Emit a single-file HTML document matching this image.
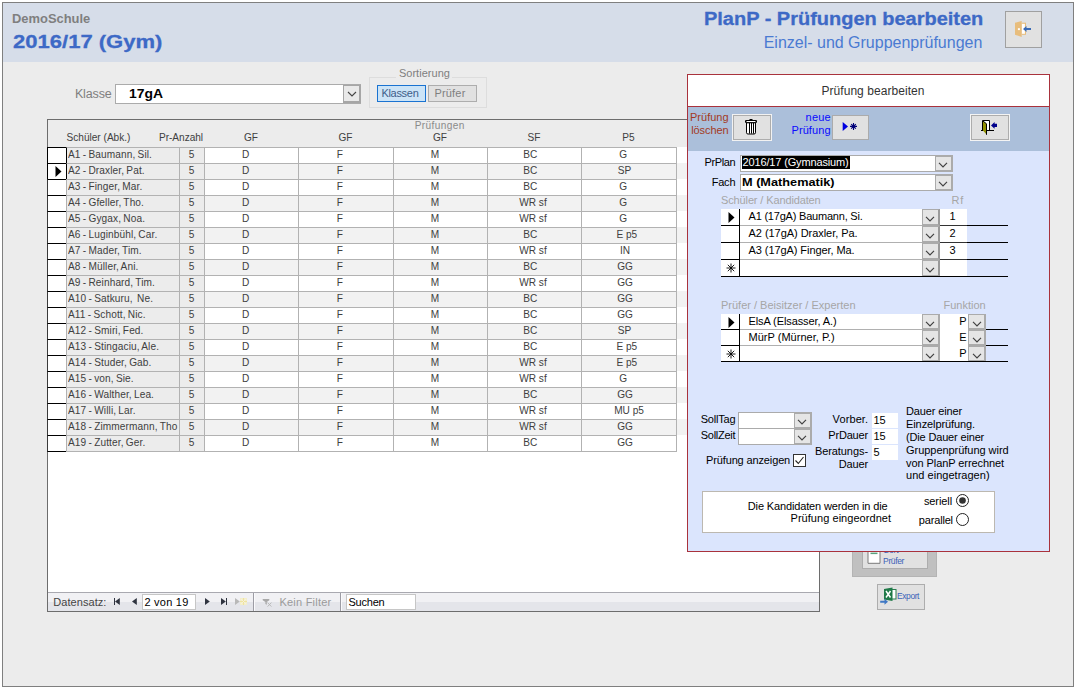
<!DOCTYPE html>
<html lang="de"><head><meta charset="utf-8"><title>PlanP - Prüfungen bearbeiten</title>
<style>
html,body{margin:0;padding:0;background:#fff;}
body{width:1078px;height:691px;position:relative;overflow:hidden;font-family:"Liberation Sans", sans-serif;}
div,span,svg{position:absolute;box-sizing:border-box;}
span{white-space:pre;}
</style></head><body>
<div style="left:2px;top:2px;width:1072px;height:685px;background:#ececec;border:1px solid #7f7f7f;"></div>
<div style="left:3px;top:3px;width:1070px;height:59px;background:#d6dde9;"></div>
<span style="top:11px;line-height:16px;font-size:12.5px;color:#7f7f7f;font-weight:bold;left:11.9px;transform:scaleX(1.0334);transform-origin:0 50%;">DemoSchule</span>
<span style="top:29px;line-height:25px;font-size:19px;color:#3d69c6;font-weight:bold;-webkit-text-stroke:0.3px;left:12.6px;transform:scaleX(1.1594);transform-origin:0 50%;">2016/17 (Gym)</span>
<span style="top:7px;line-height:24px;font-size:18.7px;color:#3d69c6;font-weight:bold;-webkit-text-stroke:0.3px;right:94.6px;transform:scaleX(1.0690);transform-origin:100% 50%;">PlanP - Prüfungen bearbeiten</span>
<span style="top:32px;line-height:21px;font-size:16px;color:#4a7ad2;letter-spacing:-0.008px;right:95.7px;">Einzel- und Gruppenprüfungen</span>
<div style="left:1005px;top:11px;width:37px;height:37px;background:#e1e1e1;border:1px solid #a0a0a0;"></div>
<svg style="left:1010px;top:16px" width="26" height="26" viewBox="1010 16 26 26">
<rect x="1021.7" y="22.7" width="4.3" height="12.1" fill="#e8bd7c"/>
<rect x="1021.7" y="23.8" width="3.2" height="10" fill="#fff"/>
<path d="M1015 22.7 L1021.7 20.9 V36.9 L1015 34.8 Z" fill="#e8bd7c"/>
<rect x="1017.9" y="28.2" width="2" height="1.9" fill="#fff"/>
<path d="M1023 29 L1026.5 26 V28 H1031 V30 H1026.5 V32 Z" fill="#3a6bb5"/>
</svg>
<span style="top:86px;line-height:16px;font-size:12.5px;color:#7f7f7f;letter-spacing:-0.130px;left:74.9px;">Klasse</span>
<div style="left:115px;top:84px;width:246px;height:20px;background:#fff;border:1px solid #ababab;"></div>
<span style="top:86px;line-height:16px;font-size:12.5px;color:#000;font-weight:bold;left:128.7px;transform:scaleX(1.1103);transform-origin:0 50%;">17gA</span>
<div style="left:343px;top:85px;width:18px;height:18px;background:#e9e9e9;border:1px solid #a6a6a6;border-right-width:2px;border-bottom-width:2px;"></div>
<svg style="left:347px;top:91px" width="10" height="7" viewBox="0 0 10 7"><path d="M1 1 L5 5 L9 1" fill="none" stroke="#444" stroke-width="1.1"/></svg>
<div style="left:369px;top:77px;width:118px;height:31px;border:1px solid #dddddd;"></div>
<div style="left:396px;top:70px;width:56px;height:10px;background:#ececec;"></div>
<span style="top:66px;line-height:14px;font-size:11px;color:#7f7f7f;letter-spacing:0.033px;left:398.9px;">Sortierung</span>
<div style="left:377px;top:85px;width:49px;height:17px;background:#cce4f7;border:1px solid #1a73d1;"></div>
<span style="top:86px;line-height:14px;font-size:11px;color:#3e5e8a;letter-spacing:-0.292px;left:381.4px;">Klassen</span>
<div style="left:428px;top:85px;width:49px;height:17px;background:#e1e1e1;border:1px solid #adadad;"></div>
<span style="top:86px;line-height:14px;font-size:11px;color:#7f7f7f;letter-spacing:0.189px;left:434.4px;">Prüfer</span>
<div style="left:47px;top:119px;width:773px;height:493px;background:#fff;border:1px solid #6d6d6d;"></div>
<div style="left:48px;top:120px;width:771px;height:28px;background:#ececec;"></div>
<span style="top:131px;line-height:13px;font-size:10.1px;color:#404040;left:66.5px;">Schüler (Abk.)</span>
<span style="top:131px;line-height:13px;font-size:10.1px;color:#404040;letter-spacing:-0.035px;left:159.0px;">Pr-Anzahl</span>
<span style="top:119px;line-height:13px;font-size:10.1px;color:#8a8a8a;letter-spacing:0.102px;left:289.8px;width:300px;text-align:center;letter-spacing:0.4px;">Prüfungen</span>
<span style="top:131px;line-height:13px;font-size:10.1px;color:#404040;left:101.0px;width:300px;text-align:center;">GF</span>
<span style="top:131px;line-height:13px;font-size:10.1px;color:#404040;left:195.5px;width:300px;text-align:center;">GF</span>
<span style="top:131px;line-height:13px;font-size:10.1px;color:#404040;left:290.0px;width:300px;text-align:center;">GF</span>
<span style="top:131px;line-height:13px;font-size:10.1px;color:#404040;left:384.0px;width:300px;text-align:center;">SF</span>
<span style="top:131px;line-height:13px;font-size:10.1px;color:#404040;left:478.5px;width:300px;text-align:center;">P5</span>
<div style="left:48px;top:147px;width:771px;height:16px;background:#ffffff;"></div>
<div style="left:47px;top:147px;width:20px;height:17px;background:#fff;border:1px solid #000;"></div>
<div style="left:66px;top:147px;width:114px;height:17px;background:#ececec;border:1px solid #b2b2b2;border-left:1px solid #000;"></div>
<div style="left:179px;top:147px;width:26px;height:17px;background:#ececec;border:1px solid #b2b2b2;"></div>
<div style="left:204px;top:147px;width:95px;height:17px;background:#ffffff;border:1px solid #b2b2b2;"></div>
<div style="left:298px;top:147px;width:96px;height:17px;background:#ffffff;border:1px solid #b2b2b2;"></div>
<div style="left:393px;top:147px;width:95px;height:17px;background:#ffffff;border:1px solid #b2b2b2;"></div>
<div style="left:487px;top:147px;width:95px;height:17px;background:#ffffff;border:1px solid #b2b2b2;"></div>
<div style="left:581px;top:147px;width:96px;height:17px;background:#ffffff;border:1px solid #b2b2b2;"></div>
<span style="top:148px;line-height:13px;font-size:10.1px;color:#404040;left:68.0px;width:110px;overflow:hidden;word-spacing:-0.7px;letter-spacing:0.11px;">A1 - Baumann, Sil.</span>
<span style="top:148px;line-height:13px;font-size:10.1px;color:#404040;left:41.5px;width:300px;text-align:center;">5</span>
<span style="top:148px;line-height:13px;font-size:10.1px;color:#404040;left:95.7px;width:300px;text-align:center;">D</span>
<span style="top:148px;line-height:13px;font-size:10.1px;color:#404040;left:189.9px;width:300px;text-align:center;">F</span>
<span style="top:148px;line-height:13px;font-size:10.1px;color:#404040;left:285.0px;width:300px;text-align:center;">M</span>
<span style="top:148px;line-height:13px;font-size:10.1px;color:#404040;left:380.3px;width:300px;text-align:center;">BC</span>
<span style="top:148px;line-height:13px;font-size:10.1px;color:#404040;left:473.3px;width:300px;text-align:center;">G</span>
<div style="left:48px;top:163px;width:771px;height:16px;background:#f2f2f2;"></div>
<div style="left:47px;top:163px;width:20px;height:17px;background:#fff;border:1px solid #000;"></div>
<div style="left:66px;top:163px;width:114px;height:17px;background:#ececec;border:1px solid #b2b2b2;border-left:1px solid #000;"></div>
<div style="left:179px;top:163px;width:26px;height:17px;background:#ececec;border:1px solid #b2b2b2;"></div>
<div style="left:204px;top:163px;width:95px;height:17px;background:#f2f2f2;border:1px solid #b2b2b2;"></div>
<div style="left:298px;top:163px;width:96px;height:17px;background:#f2f2f2;border:1px solid #b2b2b2;"></div>
<div style="left:393px;top:163px;width:95px;height:17px;background:#f2f2f2;border:1px solid #b2b2b2;"></div>
<div style="left:487px;top:163px;width:95px;height:17px;background:#f2f2f2;border:1px solid #b2b2b2;"></div>
<div style="left:581px;top:163px;width:96px;height:17px;background:#f2f2f2;border:1px solid #b2b2b2;"></div>
<span style="top:164px;line-height:13px;font-size:10.1px;color:#404040;left:68.0px;width:110px;overflow:hidden;word-spacing:-0.7px;letter-spacing:0.11px;">A2 - Draxler, Pat.</span>
<span style="top:164px;line-height:13px;font-size:10.1px;color:#404040;left:41.5px;width:300px;text-align:center;">5</span>
<span style="top:164px;line-height:13px;font-size:10.1px;color:#404040;left:95.7px;width:300px;text-align:center;">D</span>
<span style="top:164px;line-height:13px;font-size:10.1px;color:#404040;left:189.9px;width:300px;text-align:center;">F</span>
<span style="top:164px;line-height:13px;font-size:10.1px;color:#404040;left:285.0px;width:300px;text-align:center;">M</span>
<span style="top:164px;line-height:13px;font-size:10.1px;color:#404040;left:380.3px;width:300px;text-align:center;">BC</span>
<span style="top:164px;line-height:13px;font-size:10.1px;color:#404040;left:474.6px;width:300px;text-align:center;">SP</span>
<div style="left:48px;top:179px;width:771px;height:16px;background:#ffffff;"></div>
<div style="left:47px;top:179px;width:20px;height:17px;background:#fff;border:1px solid #000;border-right-color:#b2b2b2;border-left-color:#3a3a3a;"></div>
<div style="left:66px;top:179px;width:114px;height:17px;background:#ececec;border:1px solid #b2b2b2;"></div>
<div style="left:179px;top:179px;width:26px;height:17px;background:#ececec;border:1px solid #b2b2b2;"></div>
<div style="left:204px;top:179px;width:95px;height:17px;background:#ffffff;border:1px solid #b2b2b2;"></div>
<div style="left:298px;top:179px;width:96px;height:17px;background:#ffffff;border:1px solid #b2b2b2;"></div>
<div style="left:393px;top:179px;width:95px;height:17px;background:#ffffff;border:1px solid #b2b2b2;"></div>
<div style="left:487px;top:179px;width:95px;height:17px;background:#ffffff;border:1px solid #b2b2b2;"></div>
<div style="left:581px;top:179px;width:96px;height:17px;background:#ffffff;border:1px solid #b2b2b2;"></div>
<span style="top:180px;line-height:13px;font-size:10.1px;color:#404040;left:68.0px;width:110px;overflow:hidden;word-spacing:-0.7px;letter-spacing:0.11px;">A3 - Finger, Mar.</span>
<span style="top:180px;line-height:13px;font-size:10.1px;color:#404040;left:41.5px;width:300px;text-align:center;">5</span>
<span style="top:180px;line-height:13px;font-size:10.1px;color:#404040;left:95.7px;width:300px;text-align:center;">D</span>
<span style="top:180px;line-height:13px;font-size:10.1px;color:#404040;left:189.9px;width:300px;text-align:center;">F</span>
<span style="top:180px;line-height:13px;font-size:10.1px;color:#404040;left:285.0px;width:300px;text-align:center;">M</span>
<span style="top:180px;line-height:13px;font-size:10.1px;color:#404040;left:380.3px;width:300px;text-align:center;">BC</span>
<span style="top:180px;line-height:13px;font-size:10.1px;color:#404040;left:473.3px;width:300px;text-align:center;">G</span>
<div style="left:48px;top:195px;width:771px;height:16px;background:#f2f2f2;"></div>
<div style="left:47px;top:195px;width:20px;height:17px;background:#fff;border:1px solid #000;border-right-color:#b2b2b2;border-left-color:#3a3a3a;"></div>
<div style="left:66px;top:195px;width:114px;height:17px;background:#ececec;border:1px solid #b2b2b2;"></div>
<div style="left:179px;top:195px;width:26px;height:17px;background:#ececec;border:1px solid #b2b2b2;"></div>
<div style="left:204px;top:195px;width:95px;height:17px;background:#f2f2f2;border:1px solid #b2b2b2;"></div>
<div style="left:298px;top:195px;width:96px;height:17px;background:#f2f2f2;border:1px solid #b2b2b2;"></div>
<div style="left:393px;top:195px;width:95px;height:17px;background:#f2f2f2;border:1px solid #b2b2b2;"></div>
<div style="left:487px;top:195px;width:95px;height:17px;background:#f2f2f2;border:1px solid #b2b2b2;"></div>
<div style="left:581px;top:195px;width:96px;height:17px;background:#f2f2f2;border:1px solid #b2b2b2;"></div>
<span style="top:196px;line-height:13px;font-size:10.1px;color:#404040;left:68.0px;width:110px;overflow:hidden;word-spacing:-0.7px;letter-spacing:0.11px;">A4 - Gfeller, Tho.</span>
<span style="top:196px;line-height:13px;font-size:10.1px;color:#404040;left:41.5px;width:300px;text-align:center;">5</span>
<span style="top:196px;line-height:13px;font-size:10.1px;color:#404040;left:95.7px;width:300px;text-align:center;">D</span>
<span style="top:196px;line-height:13px;font-size:10.1px;color:#404040;left:189.9px;width:300px;text-align:center;">F</span>
<span style="top:196px;line-height:13px;font-size:10.1px;color:#404040;left:285.0px;width:300px;text-align:center;">M</span>
<span style="top:196px;line-height:13px;font-size:10.1px;color:#404040;left:383.0px;width:300px;text-align:center;">WR sf</span>
<span style="top:196px;line-height:13px;font-size:10.1px;color:#404040;left:473.3px;width:300px;text-align:center;">G</span>
<div style="left:48px;top:211px;width:771px;height:16px;background:#ffffff;"></div>
<div style="left:47px;top:211px;width:20px;height:17px;background:#fff;border:1px solid #000;border-right-color:#b2b2b2;border-left-color:#3a3a3a;"></div>
<div style="left:66px;top:211px;width:114px;height:17px;background:#ececec;border:1px solid #b2b2b2;"></div>
<div style="left:179px;top:211px;width:26px;height:17px;background:#ececec;border:1px solid #b2b2b2;"></div>
<div style="left:204px;top:211px;width:95px;height:17px;background:#ffffff;border:1px solid #b2b2b2;"></div>
<div style="left:298px;top:211px;width:96px;height:17px;background:#ffffff;border:1px solid #b2b2b2;"></div>
<div style="left:393px;top:211px;width:95px;height:17px;background:#ffffff;border:1px solid #b2b2b2;"></div>
<div style="left:487px;top:211px;width:95px;height:17px;background:#ffffff;border:1px solid #b2b2b2;"></div>
<div style="left:581px;top:211px;width:96px;height:17px;background:#ffffff;border:1px solid #b2b2b2;"></div>
<span style="top:212px;line-height:13px;font-size:10.1px;color:#404040;left:68.0px;width:110px;overflow:hidden;word-spacing:-0.7px;letter-spacing:0.11px;">A5 - Gygax, Noa.</span>
<span style="top:212px;line-height:13px;font-size:10.1px;color:#404040;left:41.5px;width:300px;text-align:center;">5</span>
<span style="top:212px;line-height:13px;font-size:10.1px;color:#404040;left:95.7px;width:300px;text-align:center;">D</span>
<span style="top:212px;line-height:13px;font-size:10.1px;color:#404040;left:189.9px;width:300px;text-align:center;">F</span>
<span style="top:212px;line-height:13px;font-size:10.1px;color:#404040;left:285.0px;width:300px;text-align:center;">M</span>
<span style="top:212px;line-height:13px;font-size:10.1px;color:#404040;left:383.0px;width:300px;text-align:center;">WR sf</span>
<span style="top:212px;line-height:13px;font-size:10.1px;color:#404040;left:473.3px;width:300px;text-align:center;">G</span>
<div style="left:48px;top:227px;width:771px;height:16px;background:#f2f2f2;"></div>
<div style="left:47px;top:227px;width:20px;height:17px;background:#fff;border:1px solid #000;border-right-color:#b2b2b2;border-left-color:#3a3a3a;"></div>
<div style="left:66px;top:227px;width:114px;height:17px;background:#ececec;border:1px solid #b2b2b2;"></div>
<div style="left:179px;top:227px;width:26px;height:17px;background:#ececec;border:1px solid #b2b2b2;"></div>
<div style="left:204px;top:227px;width:95px;height:17px;background:#f2f2f2;border:1px solid #b2b2b2;"></div>
<div style="left:298px;top:227px;width:96px;height:17px;background:#f2f2f2;border:1px solid #b2b2b2;"></div>
<div style="left:393px;top:227px;width:95px;height:17px;background:#f2f2f2;border:1px solid #b2b2b2;"></div>
<div style="left:487px;top:227px;width:95px;height:17px;background:#f2f2f2;border:1px solid #b2b2b2;"></div>
<div style="left:581px;top:227px;width:96px;height:17px;background:#f2f2f2;border:1px solid #b2b2b2;"></div>
<span style="top:228px;line-height:13px;font-size:10.1px;color:#404040;left:68.0px;width:110px;overflow:hidden;word-spacing:-0.7px;letter-spacing:0.11px;">A6 - Luginbühl, Car.</span>
<span style="top:228px;line-height:13px;font-size:10.1px;color:#404040;left:41.5px;width:300px;text-align:center;">5</span>
<span style="top:228px;line-height:13px;font-size:10.1px;color:#404040;left:95.7px;width:300px;text-align:center;">D</span>
<span style="top:228px;line-height:13px;font-size:10.1px;color:#404040;left:189.9px;width:300px;text-align:center;">F</span>
<span style="top:228px;line-height:13px;font-size:10.1px;color:#404040;left:285.0px;width:300px;text-align:center;">M</span>
<span style="top:228px;line-height:13px;font-size:10.1px;color:#404040;left:380.3px;width:300px;text-align:center;">BC</span>
<span style="top:228px;line-height:13px;font-size:10.1px;color:#404040;left:476.8px;width:300px;text-align:center;">E p5</span>
<div style="left:48px;top:243px;width:771px;height:16px;background:#ffffff;"></div>
<div style="left:47px;top:243px;width:20px;height:17px;background:#fff;border:1px solid #000;border-right-color:#b2b2b2;border-left-color:#3a3a3a;"></div>
<div style="left:66px;top:243px;width:114px;height:17px;background:#ececec;border:1px solid #b2b2b2;"></div>
<div style="left:179px;top:243px;width:26px;height:17px;background:#ececec;border:1px solid #b2b2b2;"></div>
<div style="left:204px;top:243px;width:95px;height:17px;background:#ffffff;border:1px solid #b2b2b2;"></div>
<div style="left:298px;top:243px;width:96px;height:17px;background:#ffffff;border:1px solid #b2b2b2;"></div>
<div style="left:393px;top:243px;width:95px;height:17px;background:#ffffff;border:1px solid #b2b2b2;"></div>
<div style="left:487px;top:243px;width:95px;height:17px;background:#ffffff;border:1px solid #b2b2b2;"></div>
<div style="left:581px;top:243px;width:96px;height:17px;background:#ffffff;border:1px solid #b2b2b2;"></div>
<span style="top:244px;line-height:13px;font-size:10.1px;color:#404040;left:68.0px;width:110px;overflow:hidden;word-spacing:-0.7px;letter-spacing:0.11px;">A7 - Mader, Tim.</span>
<span style="top:244px;line-height:13px;font-size:10.1px;color:#404040;left:41.5px;width:300px;text-align:center;">5</span>
<span style="top:244px;line-height:13px;font-size:10.1px;color:#404040;left:95.7px;width:300px;text-align:center;">D</span>
<span style="top:244px;line-height:13px;font-size:10.1px;color:#404040;left:189.9px;width:300px;text-align:center;">F</span>
<span style="top:244px;line-height:13px;font-size:10.1px;color:#404040;left:285.0px;width:300px;text-align:center;">M</span>
<span style="top:244px;line-height:13px;font-size:10.1px;color:#404040;left:383.0px;width:300px;text-align:center;">WR sf</span>
<span style="top:244px;line-height:13px;font-size:10.1px;color:#404040;left:475.1px;width:300px;text-align:center;">IN</span>
<div style="left:48px;top:259px;width:771px;height:16px;background:#f2f2f2;"></div>
<div style="left:47px;top:259px;width:20px;height:17px;background:#fff;border:1px solid #000;border-right-color:#b2b2b2;border-left-color:#3a3a3a;"></div>
<div style="left:66px;top:259px;width:114px;height:17px;background:#ececec;border:1px solid #b2b2b2;"></div>
<div style="left:179px;top:259px;width:26px;height:17px;background:#ececec;border:1px solid #b2b2b2;"></div>
<div style="left:204px;top:259px;width:95px;height:17px;background:#f2f2f2;border:1px solid #b2b2b2;"></div>
<div style="left:298px;top:259px;width:96px;height:17px;background:#f2f2f2;border:1px solid #b2b2b2;"></div>
<div style="left:393px;top:259px;width:95px;height:17px;background:#f2f2f2;border:1px solid #b2b2b2;"></div>
<div style="left:487px;top:259px;width:95px;height:17px;background:#f2f2f2;border:1px solid #b2b2b2;"></div>
<div style="left:581px;top:259px;width:96px;height:17px;background:#f2f2f2;border:1px solid #b2b2b2;"></div>
<span style="top:260px;line-height:13px;font-size:10.1px;color:#404040;left:68.0px;width:110px;overflow:hidden;word-spacing:-0.7px;letter-spacing:0.11px;">A8 - Müller, Ani.</span>
<span style="top:260px;line-height:13px;font-size:10.1px;color:#404040;left:41.5px;width:300px;text-align:center;">5</span>
<span style="top:260px;line-height:13px;font-size:10.1px;color:#404040;left:95.7px;width:300px;text-align:center;">D</span>
<span style="top:260px;line-height:13px;font-size:10.1px;color:#404040;left:189.9px;width:300px;text-align:center;">F</span>
<span style="top:260px;line-height:13px;font-size:10.1px;color:#404040;left:285.0px;width:300px;text-align:center;">M</span>
<span style="top:260px;line-height:13px;font-size:10.1px;color:#404040;left:380.3px;width:300px;text-align:center;">BC</span>
<span style="top:260px;line-height:13px;font-size:10.1px;color:#404040;left:475.0px;width:300px;text-align:center;">GG</span>
<div style="left:48px;top:275px;width:771px;height:16px;background:#ffffff;"></div>
<div style="left:47px;top:275px;width:20px;height:17px;background:#fff;border:1px solid #000;border-right-color:#b2b2b2;border-left-color:#3a3a3a;"></div>
<div style="left:66px;top:275px;width:114px;height:17px;background:#ececec;border:1px solid #b2b2b2;"></div>
<div style="left:179px;top:275px;width:26px;height:17px;background:#ececec;border:1px solid #b2b2b2;"></div>
<div style="left:204px;top:275px;width:95px;height:17px;background:#ffffff;border:1px solid #b2b2b2;"></div>
<div style="left:298px;top:275px;width:96px;height:17px;background:#ffffff;border:1px solid #b2b2b2;"></div>
<div style="left:393px;top:275px;width:95px;height:17px;background:#ffffff;border:1px solid #b2b2b2;"></div>
<div style="left:487px;top:275px;width:95px;height:17px;background:#ffffff;border:1px solid #b2b2b2;"></div>
<div style="left:581px;top:275px;width:96px;height:17px;background:#ffffff;border:1px solid #b2b2b2;"></div>
<span style="top:276px;line-height:13px;font-size:10.1px;color:#404040;left:68.0px;width:110px;overflow:hidden;word-spacing:-0.7px;letter-spacing:0.11px;">A9 - Reinhard, Tim.</span>
<span style="top:276px;line-height:13px;font-size:10.1px;color:#404040;left:41.5px;width:300px;text-align:center;">5</span>
<span style="top:276px;line-height:13px;font-size:10.1px;color:#404040;left:95.7px;width:300px;text-align:center;">D</span>
<span style="top:276px;line-height:13px;font-size:10.1px;color:#404040;left:189.9px;width:300px;text-align:center;">F</span>
<span style="top:276px;line-height:13px;font-size:10.1px;color:#404040;left:285.0px;width:300px;text-align:center;">M</span>
<span style="top:276px;line-height:13px;font-size:10.1px;color:#404040;left:383.0px;width:300px;text-align:center;">WR sf</span>
<span style="top:276px;line-height:13px;font-size:10.1px;color:#404040;left:475.0px;width:300px;text-align:center;">GG</span>
<div style="left:48px;top:291px;width:771px;height:16px;background:#f2f2f2;"></div>
<div style="left:47px;top:291px;width:20px;height:17px;background:#fff;border:1px solid #000;border-right-color:#b2b2b2;border-left-color:#3a3a3a;"></div>
<div style="left:66px;top:291px;width:114px;height:17px;background:#ececec;border:1px solid #b2b2b2;"></div>
<div style="left:179px;top:291px;width:26px;height:17px;background:#ececec;border:1px solid #b2b2b2;"></div>
<div style="left:204px;top:291px;width:95px;height:17px;background:#f2f2f2;border:1px solid #b2b2b2;"></div>
<div style="left:298px;top:291px;width:96px;height:17px;background:#f2f2f2;border:1px solid #b2b2b2;"></div>
<div style="left:393px;top:291px;width:95px;height:17px;background:#f2f2f2;border:1px solid #b2b2b2;"></div>
<div style="left:487px;top:291px;width:95px;height:17px;background:#f2f2f2;border:1px solid #b2b2b2;"></div>
<div style="left:581px;top:291px;width:96px;height:17px;background:#f2f2f2;border:1px solid #b2b2b2;"></div>
<span style="top:292px;line-height:13px;font-size:10.1px;color:#404040;left:68.0px;width:110px;overflow:hidden;word-spacing:-0.7px;letter-spacing:0.11px;">A10 - Satkuru,  Ne.</span>
<span style="top:292px;line-height:13px;font-size:10.1px;color:#404040;left:41.5px;width:300px;text-align:center;">5</span>
<span style="top:292px;line-height:13px;font-size:10.1px;color:#404040;left:95.7px;width:300px;text-align:center;">D</span>
<span style="top:292px;line-height:13px;font-size:10.1px;color:#404040;left:189.9px;width:300px;text-align:center;">F</span>
<span style="top:292px;line-height:13px;font-size:10.1px;color:#404040;left:285.0px;width:300px;text-align:center;">M</span>
<span style="top:292px;line-height:13px;font-size:10.1px;color:#404040;left:380.3px;width:300px;text-align:center;">BC</span>
<span style="top:292px;line-height:13px;font-size:10.1px;color:#404040;left:475.0px;width:300px;text-align:center;">GG</span>
<div style="left:48px;top:307px;width:771px;height:16px;background:#ffffff;"></div>
<div style="left:47px;top:307px;width:20px;height:17px;background:#fff;border:1px solid #000;border-right-color:#b2b2b2;border-left-color:#3a3a3a;"></div>
<div style="left:66px;top:307px;width:114px;height:17px;background:#ececec;border:1px solid #b2b2b2;"></div>
<div style="left:179px;top:307px;width:26px;height:17px;background:#ececec;border:1px solid #b2b2b2;"></div>
<div style="left:204px;top:307px;width:95px;height:17px;background:#ffffff;border:1px solid #b2b2b2;"></div>
<div style="left:298px;top:307px;width:96px;height:17px;background:#ffffff;border:1px solid #b2b2b2;"></div>
<div style="left:393px;top:307px;width:95px;height:17px;background:#ffffff;border:1px solid #b2b2b2;"></div>
<div style="left:487px;top:307px;width:95px;height:17px;background:#ffffff;border:1px solid #b2b2b2;"></div>
<div style="left:581px;top:307px;width:96px;height:17px;background:#ffffff;border:1px solid #b2b2b2;"></div>
<span style="top:308px;line-height:13px;font-size:10.1px;color:#404040;left:68.0px;width:110px;overflow:hidden;word-spacing:-0.7px;letter-spacing:0.11px;">A11 - Schott, Nic.</span>
<span style="top:308px;line-height:13px;font-size:10.1px;color:#404040;left:41.5px;width:300px;text-align:center;">5</span>
<span style="top:308px;line-height:13px;font-size:10.1px;color:#404040;left:95.7px;width:300px;text-align:center;">D</span>
<span style="top:308px;line-height:13px;font-size:10.1px;color:#404040;left:189.9px;width:300px;text-align:center;">F</span>
<span style="top:308px;line-height:13px;font-size:10.1px;color:#404040;left:285.0px;width:300px;text-align:center;">M</span>
<span style="top:308px;line-height:13px;font-size:10.1px;color:#404040;left:380.3px;width:300px;text-align:center;">BC</span>
<span style="top:308px;line-height:13px;font-size:10.1px;color:#404040;left:475.0px;width:300px;text-align:center;">GG</span>
<div style="left:48px;top:323px;width:771px;height:16px;background:#f2f2f2;"></div>
<div style="left:47px;top:323px;width:20px;height:17px;background:#fff;border:1px solid #000;border-right-color:#b2b2b2;border-left-color:#3a3a3a;"></div>
<div style="left:66px;top:323px;width:114px;height:17px;background:#ececec;border:1px solid #b2b2b2;"></div>
<div style="left:179px;top:323px;width:26px;height:17px;background:#ececec;border:1px solid #b2b2b2;"></div>
<div style="left:204px;top:323px;width:95px;height:17px;background:#f2f2f2;border:1px solid #b2b2b2;"></div>
<div style="left:298px;top:323px;width:96px;height:17px;background:#f2f2f2;border:1px solid #b2b2b2;"></div>
<div style="left:393px;top:323px;width:95px;height:17px;background:#f2f2f2;border:1px solid #b2b2b2;"></div>
<div style="left:487px;top:323px;width:95px;height:17px;background:#f2f2f2;border:1px solid #b2b2b2;"></div>
<div style="left:581px;top:323px;width:96px;height:17px;background:#f2f2f2;border:1px solid #b2b2b2;"></div>
<span style="top:324px;line-height:13px;font-size:10.1px;color:#404040;left:68.0px;width:110px;overflow:hidden;word-spacing:-0.7px;letter-spacing:0.11px;">A12 - Smiri, Fed.</span>
<span style="top:324px;line-height:13px;font-size:10.1px;color:#404040;left:41.5px;width:300px;text-align:center;">5</span>
<span style="top:324px;line-height:13px;font-size:10.1px;color:#404040;left:95.7px;width:300px;text-align:center;">D</span>
<span style="top:324px;line-height:13px;font-size:10.1px;color:#404040;left:189.9px;width:300px;text-align:center;">F</span>
<span style="top:324px;line-height:13px;font-size:10.1px;color:#404040;left:285.0px;width:300px;text-align:center;">M</span>
<span style="top:324px;line-height:13px;font-size:10.1px;color:#404040;left:380.3px;width:300px;text-align:center;">BC</span>
<span style="top:324px;line-height:13px;font-size:10.1px;color:#404040;left:474.6px;width:300px;text-align:center;">SP</span>
<div style="left:48px;top:339px;width:771px;height:16px;background:#ffffff;"></div>
<div style="left:47px;top:339px;width:20px;height:17px;background:#fff;border:1px solid #000;border-right-color:#b2b2b2;border-left-color:#3a3a3a;"></div>
<div style="left:66px;top:339px;width:114px;height:17px;background:#ececec;border:1px solid #b2b2b2;"></div>
<div style="left:179px;top:339px;width:26px;height:17px;background:#ececec;border:1px solid #b2b2b2;"></div>
<div style="left:204px;top:339px;width:95px;height:17px;background:#ffffff;border:1px solid #b2b2b2;"></div>
<div style="left:298px;top:339px;width:96px;height:17px;background:#ffffff;border:1px solid #b2b2b2;"></div>
<div style="left:393px;top:339px;width:95px;height:17px;background:#ffffff;border:1px solid #b2b2b2;"></div>
<div style="left:487px;top:339px;width:95px;height:17px;background:#ffffff;border:1px solid #b2b2b2;"></div>
<div style="left:581px;top:339px;width:96px;height:17px;background:#ffffff;border:1px solid #b2b2b2;"></div>
<span style="top:340px;line-height:13px;font-size:10.1px;color:#404040;left:68.0px;width:110px;overflow:hidden;word-spacing:-0.7px;letter-spacing:0.11px;">A13 - Stingaciu, Ale.</span>
<span style="top:340px;line-height:13px;font-size:10.1px;color:#404040;left:41.5px;width:300px;text-align:center;">5</span>
<span style="top:340px;line-height:13px;font-size:10.1px;color:#404040;left:95.7px;width:300px;text-align:center;">D</span>
<span style="top:340px;line-height:13px;font-size:10.1px;color:#404040;left:189.9px;width:300px;text-align:center;">F</span>
<span style="top:340px;line-height:13px;font-size:10.1px;color:#404040;left:285.0px;width:300px;text-align:center;">M</span>
<span style="top:340px;line-height:13px;font-size:10.1px;color:#404040;left:380.3px;width:300px;text-align:center;">BC</span>
<span style="top:340px;line-height:13px;font-size:10.1px;color:#404040;left:476.8px;width:300px;text-align:center;">E p5</span>
<div style="left:48px;top:355px;width:771px;height:16px;background:#f2f2f2;"></div>
<div style="left:47px;top:355px;width:20px;height:17px;background:#fff;border:1px solid #000;border-right-color:#b2b2b2;border-left-color:#3a3a3a;"></div>
<div style="left:66px;top:355px;width:114px;height:17px;background:#ececec;border:1px solid #b2b2b2;"></div>
<div style="left:179px;top:355px;width:26px;height:17px;background:#ececec;border:1px solid #b2b2b2;"></div>
<div style="left:204px;top:355px;width:95px;height:17px;background:#f2f2f2;border:1px solid #b2b2b2;"></div>
<div style="left:298px;top:355px;width:96px;height:17px;background:#f2f2f2;border:1px solid #b2b2b2;"></div>
<div style="left:393px;top:355px;width:95px;height:17px;background:#f2f2f2;border:1px solid #b2b2b2;"></div>
<div style="left:487px;top:355px;width:95px;height:17px;background:#f2f2f2;border:1px solid #b2b2b2;"></div>
<div style="left:581px;top:355px;width:96px;height:17px;background:#f2f2f2;border:1px solid #b2b2b2;"></div>
<span style="top:356px;line-height:13px;font-size:10.1px;color:#404040;left:68.0px;width:110px;overflow:hidden;word-spacing:-0.7px;letter-spacing:0.11px;">A14 - Studer, Gab.</span>
<span style="top:356px;line-height:13px;font-size:10.1px;color:#404040;left:41.5px;width:300px;text-align:center;">5</span>
<span style="top:356px;line-height:13px;font-size:10.1px;color:#404040;left:95.7px;width:300px;text-align:center;">D</span>
<span style="top:356px;line-height:13px;font-size:10.1px;color:#404040;left:189.9px;width:300px;text-align:center;">F</span>
<span style="top:356px;line-height:13px;font-size:10.1px;color:#404040;left:285.0px;width:300px;text-align:center;">M</span>
<span style="top:356px;line-height:13px;font-size:10.1px;color:#404040;left:383.0px;width:300px;text-align:center;">WR sf</span>
<span style="top:356px;line-height:13px;font-size:10.1px;color:#404040;left:476.8px;width:300px;text-align:center;">E p5</span>
<div style="left:48px;top:371px;width:771px;height:16px;background:#ffffff;"></div>
<div style="left:47px;top:371px;width:20px;height:17px;background:#fff;border:1px solid #000;border-right-color:#b2b2b2;border-left-color:#3a3a3a;"></div>
<div style="left:66px;top:371px;width:114px;height:17px;background:#ececec;border:1px solid #b2b2b2;"></div>
<div style="left:179px;top:371px;width:26px;height:17px;background:#ececec;border:1px solid #b2b2b2;"></div>
<div style="left:204px;top:371px;width:95px;height:17px;background:#ffffff;border:1px solid #b2b2b2;"></div>
<div style="left:298px;top:371px;width:96px;height:17px;background:#ffffff;border:1px solid #b2b2b2;"></div>
<div style="left:393px;top:371px;width:95px;height:17px;background:#ffffff;border:1px solid #b2b2b2;"></div>
<div style="left:487px;top:371px;width:95px;height:17px;background:#ffffff;border:1px solid #b2b2b2;"></div>
<div style="left:581px;top:371px;width:96px;height:17px;background:#ffffff;border:1px solid #b2b2b2;"></div>
<span style="top:372px;line-height:13px;font-size:10.1px;color:#404040;left:68.0px;width:110px;overflow:hidden;word-spacing:-0.7px;letter-spacing:0.11px;">A15 - von, Sie.</span>
<span style="top:372px;line-height:13px;font-size:10.1px;color:#404040;left:41.5px;width:300px;text-align:center;">5</span>
<span style="top:372px;line-height:13px;font-size:10.1px;color:#404040;left:95.7px;width:300px;text-align:center;">D</span>
<span style="top:372px;line-height:13px;font-size:10.1px;color:#404040;left:189.9px;width:300px;text-align:center;">F</span>
<span style="top:372px;line-height:13px;font-size:10.1px;color:#404040;left:285.0px;width:300px;text-align:center;">M</span>
<span style="top:372px;line-height:13px;font-size:10.1px;color:#404040;left:383.0px;width:300px;text-align:center;">WR sf</span>
<span style="top:372px;line-height:13px;font-size:10.1px;color:#404040;left:473.3px;width:300px;text-align:center;">G</span>
<div style="left:48px;top:387px;width:771px;height:16px;background:#f2f2f2;"></div>
<div style="left:47px;top:387px;width:20px;height:17px;background:#fff;border:1px solid #000;border-right-color:#b2b2b2;border-left-color:#3a3a3a;"></div>
<div style="left:66px;top:387px;width:114px;height:17px;background:#ececec;border:1px solid #b2b2b2;"></div>
<div style="left:179px;top:387px;width:26px;height:17px;background:#ececec;border:1px solid #b2b2b2;"></div>
<div style="left:204px;top:387px;width:95px;height:17px;background:#f2f2f2;border:1px solid #b2b2b2;"></div>
<div style="left:298px;top:387px;width:96px;height:17px;background:#f2f2f2;border:1px solid #b2b2b2;"></div>
<div style="left:393px;top:387px;width:95px;height:17px;background:#f2f2f2;border:1px solid #b2b2b2;"></div>
<div style="left:487px;top:387px;width:95px;height:17px;background:#f2f2f2;border:1px solid #b2b2b2;"></div>
<div style="left:581px;top:387px;width:96px;height:17px;background:#f2f2f2;border:1px solid #b2b2b2;"></div>
<span style="top:388px;line-height:13px;font-size:10.1px;color:#404040;left:68.0px;width:110px;overflow:hidden;word-spacing:-0.7px;letter-spacing:0.11px;">A16 - Walther, Lea.</span>
<span style="top:388px;line-height:13px;font-size:10.1px;color:#404040;left:41.5px;width:300px;text-align:center;">5</span>
<span style="top:388px;line-height:13px;font-size:10.1px;color:#404040;left:95.7px;width:300px;text-align:center;">D</span>
<span style="top:388px;line-height:13px;font-size:10.1px;color:#404040;left:189.9px;width:300px;text-align:center;">F</span>
<span style="top:388px;line-height:13px;font-size:10.1px;color:#404040;left:285.0px;width:300px;text-align:center;">M</span>
<span style="top:388px;line-height:13px;font-size:10.1px;color:#404040;left:380.3px;width:300px;text-align:center;">BC</span>
<span style="top:388px;line-height:13px;font-size:10.1px;color:#404040;left:475.0px;width:300px;text-align:center;">GG</span>
<div style="left:48px;top:403px;width:771px;height:16px;background:#ffffff;"></div>
<div style="left:47px;top:403px;width:20px;height:17px;background:#fff;border:1px solid #000;border-right-color:#b2b2b2;border-left-color:#3a3a3a;"></div>
<div style="left:66px;top:403px;width:114px;height:17px;background:#ececec;border:1px solid #b2b2b2;"></div>
<div style="left:179px;top:403px;width:26px;height:17px;background:#ececec;border:1px solid #b2b2b2;"></div>
<div style="left:204px;top:403px;width:95px;height:17px;background:#ffffff;border:1px solid #b2b2b2;"></div>
<div style="left:298px;top:403px;width:96px;height:17px;background:#ffffff;border:1px solid #b2b2b2;"></div>
<div style="left:393px;top:403px;width:95px;height:17px;background:#ffffff;border:1px solid #b2b2b2;"></div>
<div style="left:487px;top:403px;width:95px;height:17px;background:#ffffff;border:1px solid #b2b2b2;"></div>
<div style="left:581px;top:403px;width:96px;height:17px;background:#ffffff;border:1px solid #b2b2b2;"></div>
<span style="top:404px;line-height:13px;font-size:10.1px;color:#404040;left:68.0px;width:110px;overflow:hidden;word-spacing:-0.7px;letter-spacing:0.11px;">A17 - Willi, Lar.</span>
<span style="top:404px;line-height:13px;font-size:10.1px;color:#404040;left:41.5px;width:300px;text-align:center;">5</span>
<span style="top:404px;line-height:13px;font-size:10.1px;color:#404040;left:95.7px;width:300px;text-align:center;">D</span>
<span style="top:404px;line-height:13px;font-size:10.1px;color:#404040;left:189.9px;width:300px;text-align:center;">F</span>
<span style="top:404px;line-height:13px;font-size:10.1px;color:#404040;left:285.0px;width:300px;text-align:center;">M</span>
<span style="top:404px;line-height:13px;font-size:10.1px;color:#404040;left:383.0px;width:300px;text-align:center;">WR sf</span>
<span style="top:404px;line-height:13px;font-size:10.1px;color:#404040;left:479.0px;width:300px;text-align:center;">MU p5</span>
<div style="left:48px;top:419px;width:771px;height:16px;background:#f2f2f2;"></div>
<div style="left:47px;top:419px;width:20px;height:17px;background:#fff;border:1px solid #000;border-right-color:#b2b2b2;border-left-color:#3a3a3a;"></div>
<div style="left:66px;top:419px;width:114px;height:17px;background:#ececec;border:1px solid #b2b2b2;"></div>
<div style="left:179px;top:419px;width:26px;height:17px;background:#ececec;border:1px solid #b2b2b2;"></div>
<div style="left:204px;top:419px;width:95px;height:17px;background:#f2f2f2;border:1px solid #b2b2b2;"></div>
<div style="left:298px;top:419px;width:96px;height:17px;background:#f2f2f2;border:1px solid #b2b2b2;"></div>
<div style="left:393px;top:419px;width:95px;height:17px;background:#f2f2f2;border:1px solid #b2b2b2;"></div>
<div style="left:487px;top:419px;width:95px;height:17px;background:#f2f2f2;border:1px solid #b2b2b2;"></div>
<div style="left:581px;top:419px;width:96px;height:17px;background:#f2f2f2;border:1px solid #b2b2b2;"></div>
<span style="top:420px;line-height:13px;font-size:10.1px;color:#404040;left:68.0px;width:110px;overflow:hidden;word-spacing:-0.7px;letter-spacing:0.11px;">A18 - Zimmermann, Tho</span>
<span style="top:420px;line-height:13px;font-size:10.1px;color:#404040;left:41.5px;width:300px;text-align:center;">5</span>
<span style="top:420px;line-height:13px;font-size:10.1px;color:#404040;left:95.7px;width:300px;text-align:center;">D</span>
<span style="top:420px;line-height:13px;font-size:10.1px;color:#404040;left:189.9px;width:300px;text-align:center;">F</span>
<span style="top:420px;line-height:13px;font-size:10.1px;color:#404040;left:285.0px;width:300px;text-align:center;">M</span>
<span style="top:420px;line-height:13px;font-size:10.1px;color:#404040;left:383.0px;width:300px;text-align:center;">WR sf</span>
<span style="top:420px;line-height:13px;font-size:10.1px;color:#404040;left:475.0px;width:300px;text-align:center;">GG</span>
<div style="left:48px;top:435px;width:771px;height:16px;background:#ffffff;"></div>
<div style="left:47px;top:435px;width:20px;height:17px;background:#fff;border:1px solid #000;border-right-color:#b2b2b2;border-left-color:#3a3a3a;"></div>
<div style="left:66px;top:435px;width:114px;height:17px;background:#ececec;border:1px solid #b2b2b2;"></div>
<div style="left:179px;top:435px;width:26px;height:17px;background:#ececec;border:1px solid #b2b2b2;"></div>
<div style="left:204px;top:435px;width:95px;height:17px;background:#ffffff;border:1px solid #b2b2b2;"></div>
<div style="left:298px;top:435px;width:96px;height:17px;background:#ffffff;border:1px solid #b2b2b2;"></div>
<div style="left:393px;top:435px;width:95px;height:17px;background:#ffffff;border:1px solid #b2b2b2;"></div>
<div style="left:487px;top:435px;width:95px;height:17px;background:#ffffff;border:1px solid #b2b2b2;"></div>
<div style="left:581px;top:435px;width:96px;height:17px;background:#ffffff;border:1px solid #b2b2b2;"></div>
<span style="top:436px;line-height:13px;font-size:10.1px;color:#404040;left:68.0px;width:110px;overflow:hidden;word-spacing:-0.7px;letter-spacing:0.11px;">A19 - Zutter, Ger.</span>
<span style="top:436px;line-height:13px;font-size:10.1px;color:#404040;left:41.5px;width:300px;text-align:center;">5</span>
<span style="top:436px;line-height:13px;font-size:10.1px;color:#404040;left:95.7px;width:300px;text-align:center;">D</span>
<span style="top:436px;line-height:13px;font-size:10.1px;color:#404040;left:189.9px;width:300px;text-align:center;">F</span>
<span style="top:436px;line-height:13px;font-size:10.1px;color:#404040;left:285.0px;width:300px;text-align:center;">M</span>
<span style="top:436px;line-height:13px;font-size:10.1px;color:#404040;left:380.3px;width:300px;text-align:center;">BC</span>
<span style="top:436px;line-height:13px;font-size:10.1px;color:#404040;left:475.0px;width:300px;text-align:center;">GG</span>
<svg style="left:55px;top:166px" width="7" height="11" viewBox="0 0 7 11"><path d="M0.5 0 L6.5 5.5 L0.5 11 Z" fill="#000"/></svg>
<div style="left:48px;top:592px;width:771px;height:19px;background:linear-gradient(#f1f1f4 0px,#f1f1f4 9px,#e4e5ea 9px,#e4e5ea 18px);border-top:1px solid #a9a9b0;"></div>
<span style="top:595px;line-height:14px;font-size:11px;color:#444;letter-spacing:0.071px;left:53.2px;">Datensatz:</span>
<div style="left:142px;top:594px;width:54px;height:16px;background:#fff;border:1px solid #c6c6c6;"></div>
<span style="top:595px;line-height:14px;font-size:11px;color:#000;letter-spacing:0.237px;left:144.4px;">2 von 19</span>
<div style="left:114px;top:598px;width:1px;height:7px;background:#2f3440;"></div>
<svg style="left:115.2px;top:598px" width="5" height="7" viewBox="0 0 5 7"><path d="M4.8 0 L0 3.5 L4.8 7 Z" fill="#2f3440"/></svg>
<svg style="left:132px;top:598px" width="5" height="7" viewBox="0 0 5 7"><path d="M4.8 0 L0 3.5 L4.8 7 Z" fill="#2f3440"/></svg>
<svg style="left:204.8px;top:598px" width="5" height="7" viewBox="0 0 5 7"><path d="M0 0 L4.8 3.5 L0 7 Z" fill="#2f3440"/></svg>
<svg style="left:220.8px;top:598px" width="5" height="7" viewBox="0 0 5 7"><path d="M0 0 L4.8 3.5 L0 7 Z" fill="#2f3440"/></svg>
<div style="left:225.6px;top:598px;width:1px;height:7px;background:#2f3440;"></div>
<svg style="left:234.8px;top:598px" width="5" height="7" viewBox="0 0 5 7"><path d="M0 0 L4.8 3.5 L0 7 Z" fill="#b8b8b8"/></svg>
<svg style="left:240px;top:598px" width="7" height="7" viewBox="0 0 7 7"><rect width="7" height="7" fill="#f3eecb"/><path d="M3.5 0 V7 M0 3.5 H7" stroke="#efe3a0" stroke-width="1"/><path d="M1 1 L6 6 M6 1 L1 6" stroke="#f7f3dc" stroke-width="0.8"/></svg>
<div style="left:253px;top:593px;width:1px;height:18px;background:#9c9ca4;"></div>
<div style="left:254px;top:593px;width:1px;height:18px;background:#fafafc;"></div>
<div style="left:340px;top:593px;width:1px;height:18px;background:#9c9ca4;"></div>
<div style="left:341px;top:593px;width:1px;height:18px;background:#fafafc;"></div>
<svg style="left:262px;top:598px" width="11" height="10" viewBox="0 0 11 10"><path d="M0.7 1 H7.3 V2.2 L4.8 4 V6.8 L3.4 6 V4 L0.7 2.2 Z" fill="#a9a9a9"/><path d="M5.6 4.6 L9.4 8.6 M9.4 4.6 L5.6 8.6" stroke="#b4b4b4" stroke-width="0.9"/></svg>
<span style="top:595px;line-height:14px;font-size:11px;color:#9a9a9a;letter-spacing:0.234px;left:279.4px;">Kein Filter</span>
<div style="left:346px;top:594px;width:70px;height:16px;background:#fff;border:1px solid #c6c6c6;"></div>
<span style="top:595px;line-height:14px;font-size:11px;color:#000;letter-spacing:-0.202px;left:348.4px;">Suchen</span>
<div style="left:852px;top:540px;width:85px;height:37px;background:#c0c0c0;border:1px solid #b4b4b4;"></div>
<div style="left:862px;top:540px;width:66px;height:29px;background:#e1e1e1;border:1px solid #adadad;"></div>
<svg style="left:867px;top:544px" width="14" height="20" viewBox="0 0 14 20"><path d="M1 1 H9 L13 5 V19.3 H1 Z" fill="#fff" stroke="#7a7a7a" stroke-width="1"/><rect x="3.5" y="8.6" width="7" height="1.5" fill="#5aa07c"/></svg>
<span style="top:545px;line-height:11px;font-size:8.5px;color:#3b62b8;letter-spacing:-0.186px;left:883.6px;">Sort</span>
<span style="top:556px;line-height:11px;font-size:8.5px;color:#3b62b8;letter-spacing:-0.384px;left:883.1px;">Prüfer</span>
<div style="left:877px;top:584px;width:48px;height:26px;background:#e1e1e1;border:1px solid #adadad;"></div>
<svg style="left:880px;top:587px" width="18" height="18" viewBox="0 0 18 18">
<rect x="10" y="2.5" width="6" height="9.5" fill="#fff" stroke="#2a7d4f" stroke-width="1"/>
<path d="M4 2 L12.5 0.5 V14 L4 12.5 Z" fill="#1f7a48"/>
<path d="M6 4 L10.5 10.5 M10.5 4 L6 10.5" stroke="#fff" stroke-width="1.5"/>
<path d="M0.2 13.7 H4.5 V11.7 L8 14.7 L4.5 17.8 V15.7 H0.2 Z" fill="#3f78c4"/>
</svg>
<span style="top:591px;line-height:11px;font-size:8.5px;color:#3b62b8;letter-spacing:-0.455px;left:897.1px;">Export</span>
<div style="left:687px;top:74px;width:363px;height:478px;background:#dbe5fd;border:1px solid #a9323c;"></div>
<div style="left:688px;top:75px;width:361px;height:31px;background:#fff;"></div>
<div style="left:688px;top:106px;width:361px;height:1px;background:#a9323c;"></div>
<div style="left:688px;top:107px;width:361px;height:44px;background:#abbfda;"></div>
<span style="top:83px;line-height:16px;font-size:12px;color:#333;letter-spacing:0.062px;left:821.4px;">Prüfung bearbeiten</span>
<span style="top:110px;line-height:14px;font-size:11px;color:#a33a1e;letter-spacing:0.010px;right:349.4px;">Prüfung</span>
<span style="top:123px;line-height:14px;font-size:11px;color:#a33a1e;letter-spacing:-0.117px;right:349.6px;">löschen</span>
<div style="left:732px;top:114px;width:40px;height:27px;background:#e1e1e1;border:1px solid #f2f2f2;box-shadow:inset 0 0 0 1px #adadad;"></div>
<svg style="left:744px;top:118px" width="14" height="18" viewBox="-1 -1 14 18">
<rect x="4.5" y="0" width="3" height="1.4" fill="#000"/>
<rect x="0" y="1" width="12" height="3" rx="1.3" fill="#000"/>
<rect x="1.5" y="2" width="9" height="1" fill="#fff"/>
<path d="M1.5 3.8 V13.8 Q1.5 15 3 15 H9 Q10.5 15 10.5 13.8 V3.8 Z" fill="#fff" stroke="#000" stroke-width="1"/>
<path d="M4.5 4 V14.6 M6.5 4 V14.6 M8.5 4 V14.6" stroke="#000" stroke-width="1"/>
</svg>
<span style="top:110px;line-height:14px;font-size:11px;color:#0a0aff;letter-spacing:0.154px;right:247.3px;">neue</span>
<span style="top:123px;line-height:14px;font-size:11px;color:#0a0aff;letter-spacing:0.081px;right:247.4px;">Prüfung</span>
<div style="left:832px;top:115px;width:37px;height:25px;background:#e1e1e1;border:1px solid #ababab;"></div>
<svg style="left:840px;top:119px" width="20" height="16" viewBox="840 119 20 16"><path d="M842.7 121.9 L848 126.4 L842.7 131 Z" fill="#0000e0"/><path d="M853.5 122.9 V129.9 M850 126.4 H857 M851.2 124.1 L855.8 128.7 M855.8 124.1 L851.2 128.7" stroke="#000078" stroke-width="1.1"/><circle cx="853.5" cy="126.4" r="1.5" fill="#000078"/></svg>
<div style="left:970px;top:114px;width:40px;height:27px;background:#e1e1e1;border:1px solid #f4f4f4;box-shadow:inset 0 0 0 1px #adadad;"></div>
<svg style="left:979px;top:118px" width="22" height="20" viewBox="979 118 22 20">
<path d="M982.5 130.5 V120.5 H989.5 V130.5" fill="#fff" stroke="#000" stroke-width="1"/>
<path d="M981 130.5 H994" stroke="#000" stroke-width="1"/>
<path d="M983 121 L986.5 123.8 V134.6 L983 130.6 Z" fill="#8f8f00"/>
<path d="M983 121 L986.5 123.8 V134.8" fill="none" stroke="#000" stroke-width="1"/>
<path d="M991 125.4 L994.6 121.9 V123.7 H997 V127 H994.6 V128.8 Z" fill="#00008b"/>
</svg>
<span style="top:155px;line-height:14px;font-size:11px;color:#000;letter-spacing:-0.405px;right:342.9px;">PrPlan</span>
<div style="left:740px;top:155px;width:213px;height:17px;background:#fff;border:1px solid #ababab;"></div>
<div style="left:935px;top:155px;width:18px;height:17px;background:#e5e5e5;border:2px solid #ababab;border-left-width:1px;"></div>
<svg style="left:938.2px;top:162.3px" width="10" height="6" viewBox="0 0 10 6"><path d="M1 0.9 L5 4.9 L9 0.9" fill="none" stroke="#404040" stroke-width="1.15"/></svg>
<div style="left:742px;top:156px;width:108px;height:13px;background:#000;"></div>
<span style="top:155px;line-height:14px;font-size:11px;color:#fff;letter-spacing:-0.144px;left:742.5px;">2016/17 (Gymnasium)</span>
<span style="top:175px;line-height:14px;font-size:11px;color:#000;letter-spacing:-0.217px;right:342.7px;">Fach</span>
<div style="left:740px;top:174px;width:213px;height:17px;background:#fff;border:1px solid #ababab;"></div>
<div style="left:935px;top:174px;width:18px;height:17px;background:#e5e5e5;border:2px solid #ababab;border-left-width:1px;"></div>
<svg style="left:938.2px;top:181.3px" width="10" height="6" viewBox="0 0 10 6"><path d="M1 0.9 L5 4.9 L9 0.9" fill="none" stroke="#404040" stroke-width="1.15"/></svg>
<span style="top:175px;line-height:14px;font-size:11px;color:#000;font-weight:bold;left:742.0px;transform:scaleX(1.1566);transform-origin:0 50%;">M (Mathematik)</span>
<span style="top:193px;line-height:14px;font-size:11px;color:#a6a6a6;letter-spacing:-0.127px;left:721.0px;">Schüler / Kandidaten</span>
<span style="top:193px;line-height:14px;font-size:11px;color:#a6a6a6;letter-spacing:0.800px;left:951.5px;">Rf</span>
<div style="left:721px;top:209px;width:19px;height:17px;background:#fff;border-bottom:1px solid #000;border-right:1px solid #000;"></div>
<div style="left:740px;top:209px;width:183px;height:17px;background:#fff;border-bottom:1px solid #b0b0b0;"></div>
<div style="left:922px;top:209px;width:18px;height:17px;background:#e5e5e5;border:1px solid #ababab;border-right:2px solid #9a9a9a;border-bottom-width:2px;"></div>
<svg style="left:925px;top:216.0px" width="10" height="6" viewBox="0 0 10 6"><path d="M1 0.9 L5 4.9 L9 0.9" fill="none" stroke="#404040" stroke-width="1.15"/></svg>
<svg style="left:728px;top:211.5px" width="7" height="11" viewBox="0 0 7 11"><path d="M0.5 0 L6.5 5.5 L0.5 11 Z" fill="#000"/></svg>
<div style="left:940px;top:209px;width:27px;height:17px;background:#fff;border-bottom:1px solid #333;"></div>
<div style="left:967px;top:225px;width:41px;height:1px;background:#000;"></div>
<span style="top:209px;line-height:14px;font-size:11px;color:#000;letter-spacing:-0.206px;left:748.5px;">A1 (17gA) Baumann, Si.</span>
<span style="top:209px;line-height:14px;font-size:11px;color:#000;left:802.5px;width:300px;text-align:center;">1</span>
<div style="left:721px;top:226px;width:19px;height:17px;background:#fff;border-bottom:1px solid #000;border-right:1px solid #000;"></div>
<div style="left:740px;top:226px;width:183px;height:17px;background:#fff;border-bottom:1px solid #b0b0b0;"></div>
<div style="left:922px;top:226px;width:18px;height:17px;background:#e5e5e5;border:1px solid #ababab;border-right:2px solid #9a9a9a;border-bottom-width:2px;"></div>
<svg style="left:925px;top:233.0px" width="10" height="6" viewBox="0 0 10 6"><path d="M1 0.9 L5 4.9 L9 0.9" fill="none" stroke="#404040" stroke-width="1.15"/></svg>
<div style="left:940px;top:226px;width:27px;height:17px;background:#fff;border-bottom:1px solid #333;"></div>
<div style="left:967px;top:242px;width:41px;height:1px;background:#000;"></div>
<span style="top:226px;line-height:14px;font-size:11px;color:#000;letter-spacing:-0.044px;left:748.5px;">A2 (17gA) Draxler, Pa.</span>
<span style="top:226px;line-height:14px;font-size:11px;color:#000;left:802.5px;width:300px;text-align:center;">2</span>
<div style="left:721px;top:243px;width:19px;height:17px;background:#fff;border-bottom:1px solid #000;border-right:1px solid #000;"></div>
<div style="left:740px;top:243px;width:183px;height:17px;background:#fff;border-bottom:1px solid #b0b0b0;"></div>
<div style="left:922px;top:243px;width:18px;height:17px;background:#e5e5e5;border:1px solid #ababab;border-right:2px solid #9a9a9a;border-bottom-width:2px;"></div>
<svg style="left:925px;top:250.0px" width="10" height="6" viewBox="0 0 10 6"><path d="M1 0.9 L5 4.9 L9 0.9" fill="none" stroke="#404040" stroke-width="1.15"/></svg>
<div style="left:940px;top:243px;width:27px;height:17px;background:#fff;border-bottom:1px solid #333;"></div>
<div style="left:967px;top:259px;width:41px;height:1px;background:#000;"></div>
<span style="top:243px;line-height:14px;font-size:11px;color:#000;letter-spacing:-0.072px;left:748.5px;">A3 (17gA) Finger, Ma.</span>
<span style="top:243px;line-height:14px;font-size:11px;color:#000;left:802.5px;width:300px;text-align:center;">3</span>
<div style="left:721px;top:260px;width:19px;height:17px;background:#fff;border-bottom:1px solid #000;border-right:1px solid #000;"></div>
<div style="left:740px;top:260px;width:183px;height:17px;background:#fff;border-bottom:1px solid #b0b0b0;"></div>
<div style="left:922px;top:260px;width:18px;height:17px;background:#e5e5e5;border:1px solid #ababab;border-right:2px solid #9a9a9a;border-bottom-width:2px;"></div>
<svg style="left:925px;top:267.0px" width="10" height="6" viewBox="0 0 10 6"><path d="M1 0.9 L5 4.9 L9 0.9" fill="none" stroke="#404040" stroke-width="1.15"/></svg>
<svg style="left:726px;top:263px" width="10" height="10" viewBox="0 0 10 10"><path d="M5 0.5 V9.5 M0.5 5 H9.5 M1.8 1.8 L8.2 8.2 M8.2 1.8 L1.8 8.2" stroke="#000" stroke-width="0.9"/></svg>
<div style="left:940px;top:260px;width:27px;height:17px;background:#fff;border-bottom:1px solid #333;"></div>
<div style="left:967px;top:276px;width:41px;height:1px;background:#000;"></div>
<div style="left:721px;top:276px;width:287px;height:1px;background:#000;"></div>
<span style="top:298px;line-height:14px;font-size:11px;color:#a6a6a6;left:721.0px;">Prüfer / Beisitzer / Experten</span>
<span style="top:298px;line-height:14px;font-size:11px;color:#a6a6a6;letter-spacing:-0.013px;left:943.5px;">Funktion</span>
<div style="left:721px;top:314px;width:19px;height:16px;background:#fff;border-bottom:1px solid #000;border-right:1px solid #000;"></div>
<div style="left:740px;top:314px;width:183px;height:16px;background:#fff;border-bottom:1px solid #b0b0b0;"></div>
<div style="left:922px;top:314px;width:18px;height:16px;background:#e5e5e5;border:1px solid #ababab;border-right-width:2px;border-bottom-width:2px;"></div>
<svg style="left:925px;top:321px" width="10" height="6" viewBox="0 0 10 6"><path d="M1 0.9 L5 4.9 L9 0.9" fill="none" stroke="#404040" stroke-width="1.15"/></svg>
<div style="left:940px;top:314px;width:29px;height:16px;background:#fff;"></div>
<div style="left:968px;top:314px;width:18px;height:16px;background:#e5e5e5;border:1px solid #ababab;border-right-width:2px;border-bottom-width:2px;"></div>
<svg style="left:971.5px;top:321px" width="10" height="6" viewBox="0 0 10 6"><path d="M1 0.9 L5 4.9 L9 0.9" fill="none" stroke="#404040" stroke-width="1.15"/></svg>
<div style="left:986px;top:329px;width:22px;height:1px;background:#000;"></div>
<svg style="left:728px;top:316.5px" width="7" height="11" viewBox="0 0 7 11"><path d="M0.5 0 L6.5 5.5 L0.5 11 Z" fill="#000"/></svg>
<span style="top:314px;line-height:14px;font-size:11px;color:#000;letter-spacing:-0.093px;left:748.5px;">ElsA (Elsasser, A.)</span>
<span style="top:314px;line-height:14px;font-size:11px;color:#000;right:111.5px;">P</span>
<div style="left:721px;top:330px;width:19px;height:16px;background:#fff;border-bottom:1px solid #000;border-right:1px solid #000;"></div>
<div style="left:740px;top:330px;width:183px;height:16px;background:#fff;border-bottom:1px solid #b0b0b0;"></div>
<div style="left:922px;top:330px;width:18px;height:16px;background:#e5e5e5;border:1px solid #ababab;border-right-width:2px;border-bottom-width:2px;"></div>
<svg style="left:925px;top:337px" width="10" height="6" viewBox="0 0 10 6"><path d="M1 0.9 L5 4.9 L9 0.9" fill="none" stroke="#404040" stroke-width="1.15"/></svg>
<div style="left:940px;top:330px;width:29px;height:16px;background:#fff;"></div>
<div style="left:968px;top:330px;width:18px;height:16px;background:#e5e5e5;border:1px solid #ababab;border-right-width:2px;border-bottom-width:2px;"></div>
<svg style="left:971.5px;top:337px" width="10" height="6" viewBox="0 0 10 6"><path d="M1 0.9 L5 4.9 L9 0.9" fill="none" stroke="#404040" stroke-width="1.15"/></svg>
<div style="left:986px;top:345px;width:22px;height:1px;background:#000;"></div>
<span style="top:330px;line-height:14px;font-size:11px;color:#000;letter-spacing:0.018px;left:748.5px;">MürP (Mürner, P.)</span>
<span style="top:330px;line-height:14px;font-size:11px;color:#000;right:111.5px;">E</span>
<div style="left:721px;top:346px;width:19px;height:16px;background:#fff;border-bottom:1px solid #000;border-right:1px solid #000;"></div>
<div style="left:740px;top:346px;width:183px;height:16px;background:#fff;border-bottom:1px solid #b0b0b0;"></div>
<div style="left:922px;top:346px;width:18px;height:16px;background:#e5e5e5;border:1px solid #ababab;border-right-width:2px;border-bottom-width:2px;"></div>
<svg style="left:925px;top:353px" width="10" height="6" viewBox="0 0 10 6"><path d="M1 0.9 L5 4.9 L9 0.9" fill="none" stroke="#404040" stroke-width="1.15"/></svg>
<div style="left:940px;top:346px;width:29px;height:16px;background:#fff;"></div>
<div style="left:968px;top:346px;width:18px;height:16px;background:#e5e5e5;border:1px solid #ababab;border-right-width:2px;border-bottom-width:2px;"></div>
<svg style="left:971.5px;top:353px" width="10" height="6" viewBox="0 0 10 6"><path d="M1 0.9 L5 4.9 L9 0.9" fill="none" stroke="#404040" stroke-width="1.15"/></svg>
<div style="left:986px;top:361px;width:22px;height:1px;background:#000;"></div>
<svg style="left:726px;top:349px" width="10" height="10" viewBox="0 0 10 10"><path d="M5 0.5 V9.5 M0.5 5 H9.5 M1.8 1.8 L8.2 8.2 M8.2 1.8 L1.8 8.2" stroke="#000" stroke-width="0.9"/></svg>
<span style="top:346px;line-height:14px;font-size:11px;color:#000;right:111.5px;">P</span>
<div style="left:721px;top:361px;width:287px;height:1px;background:#000;"></div>
<span style="top:412px;line-height:14px;font-size:11px;color:#000;letter-spacing:-0.211px;right:342.7px;">SollTag</span>
<span style="top:428px;line-height:14px;font-size:11px;color:#000;letter-spacing:-0.261px;right:342.7px;">SollZeit</span>
<div style="left:738px;top:412px;width:74px;height:17px;background:#fff;border:1px solid #ababab;"></div>
<div style="left:794px;top:412px;width:18px;height:17px;background:#e5e5e5;border:2px solid #ababab;border-left-width:1px;"></div>
<svg style="left:797.2px;top:419.3px" width="10" height="6" viewBox="0 0 10 6"><path d="M1 0.9 L5 4.9 L9 0.9" fill="none" stroke="#404040" stroke-width="1.15"/></svg>
<div style="left:738px;top:428px;width:74px;height:17px;background:#fff;border:1px solid #ababab;"></div>
<div style="left:794px;top:428px;width:18px;height:17px;background:#e5e5e5;border:2px solid #ababab;border-left-width:1px;"></div>
<svg style="left:797.2px;top:435.3px" width="10" height="6" viewBox="0 0 10 6"><path d="M1 0.9 L5 4.9 L9 0.9" fill="none" stroke="#404040" stroke-width="1.15"/></svg>
<span style="top:453px;line-height:14px;font-size:11px;color:#000;letter-spacing:-0.133px;left:706.0px;">Prüfung anzeigen</span>
<div style="left:793px;top:454px;width:13px;height:13px;background:#fff;border:1px solid #333;"></div>
<svg style="left:794px;top:455px" width="11" height="11" viewBox="0 0 11 11"><path d="M1.5 5.5 L4.3 8.5 L9.5 2" fill="none" stroke="#222" stroke-width="1.1"/></svg>
<span style="top:412px;line-height:14px;font-size:11px;color:#000;letter-spacing:0.106px;right:209.8px;">Vorber.</span>
<span style="top:428px;line-height:14px;font-size:11px;color:#000;letter-spacing:-0.196px;right:210.1px;">PrDauer</span>
<span style="top:444px;line-height:14px;font-size:11px;color:#000;letter-spacing:-0.071px;right:210.0px;">Beratungs-</span>
<span style="top:457px;line-height:14px;font-size:11px;color:#000;letter-spacing:-0.174px;right:210.1px;">Dauer</span>
<div style="left:872px;top:413px;width:26px;height:15px;background:#fff;"></div>
<span style="top:413px;line-height:14px;font-size:11px;color:#000;letter-spacing:-0.075px;left:873.5px;">15</span>
<div style="left:872px;top:429px;width:26px;height:15px;background:#fff;"></div>
<span style="top:429px;line-height:14px;font-size:11px;color:#000;letter-spacing:-0.075px;left:873.5px;">15</span>
<div style="left:872px;top:445px;width:26px;height:15px;background:#fff;"></div>
<span style="top:445px;line-height:14px;font-size:11px;color:#000;left:873.5px;">5</span>
<span style="top:404px;line-height:14px;font-size:11px;color:#000;letter-spacing:-0.126px;left:906.0px;">Dauer einer</span>
<span style="top:417px;line-height:14px;font-size:11px;color:#000;letter-spacing:-0.088px;left:906.0px;">Einzelprüfung.</span>
<span style="top:430px;line-height:14px;font-size:11px;color:#000;letter-spacing:-0.163px;left:906.0px;">(Die Dauer einer</span>
<span style="top:443px;line-height:14px;font-size:11px;color:#000;letter-spacing:-0.039px;left:906.0px;">Gruppenprüfung wird</span>
<span style="top:456px;line-height:14px;font-size:11px;color:#000;letter-spacing:-0.073px;left:906.0px;">von PlanP errechnet</span>
<span style="top:468px;line-height:14px;font-size:11px;color:#000;letter-spacing:0.026px;left:906.0px;">und eingetragen)</span>
<div style="left:702px;top:491px;width:293px;height:42px;background:#fff;border:1px solid #bcb8b0;"></div>
<span style="top:499px;line-height:14px;font-size:11px;color:#000;letter-spacing:-0.147px;right:190.6px;">Die Kandidaten werden in die</span>
<span style="top:511px;line-height:14px;font-size:11px;color:#000;letter-spacing:0.048px;right:186.9px;">Prüfung eingeordnet</span>
<span style="top:494px;line-height:14px;font-size:11px;color:#000;letter-spacing:-0.091px;right:126.0px;">seriell</span>
<span style="top:513px;line-height:14px;font-size:11px;color:#000;letter-spacing:-0.171px;right:125.1px;">parallel</span>
<svg style="left:955px;top:493px" width="15" height="15" viewBox="0 0 15 15"><circle cx="7.5" cy="7.5" r="6" fill="#fff" stroke="#222" stroke-width="1"/><circle cx="7.5" cy="7.5" r="3.3" fill="#333"/></svg>
<svg style="left:955px;top:512px" width="15" height="15" viewBox="0 0 15 15"><circle cx="7.5" cy="7.5" r="6" fill="#fff" stroke="#222" stroke-width="1"/></svg>
</body></html>
